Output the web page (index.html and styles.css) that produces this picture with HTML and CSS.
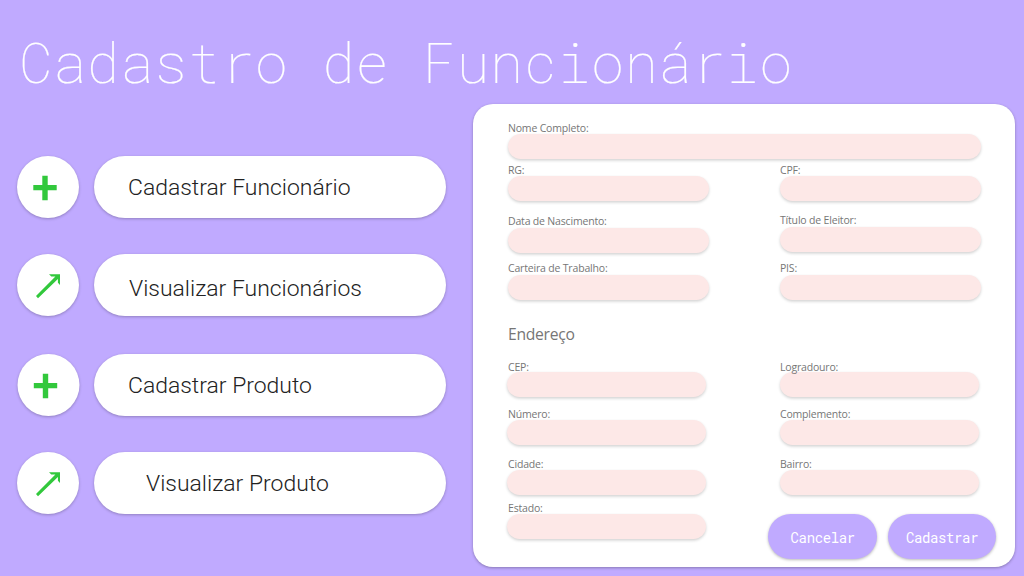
FILE: index.html
```html
<!DOCTYPE html>
<html lang="pt-BR">
<head>
<meta charset="utf-8">
<title>Cadastro de Funcionário</title>
<link rel="stylesheet" href="styles.css">
</head>
<body>
<h1 class="title">Cadastro de Funcionário</h1>
<div class="layout">
  <nav class="menu">
    <div class="item"><span class="circle"><svg class="icon" viewBox="0 0 62 62"><path d="M25.300 19.800h5.400v9.300h9v5.200h-9v10h-5.400v-10h-9v-5.200h9z"/></svg></span><a class="pill"><span>Cadastrar Funcionário</span></a></div>
    <div class="item"><span class="circle"><svg class="icon" viewBox="0 0 62 62"><path d="M32 20.200H43V31L40.900 28.700V25L21 44.200L19 42L38.400 22.600H34.300z"/></svg></span><a class="pill low"><span>Visualizar Funcionários</span></a></div>
    <div class="item"><span class="circle nudge"><svg class="icon" viewBox="0 0 62 62"><path d="M25.300 19.800h5.400v9.300h9v5.200h-9v10h-5.400v-10h-9v-5.200h9z"/></svg></span><a class="pill"><span>Cadastrar Produto</span></a></div>
    <div class="item"><span class="circle"><svg class="icon" viewBox="0 0 62 62"><path d="M32 20.200H43V31L40.900 28.700V25L21 44.200L19 42L38.400 22.600H34.300z"/></svg></span><a class="pill indent"><span>Visualizar Produto</span></a></div>
  </nav>
  <form class="panel">
    <div class="grid personal">
      <label class="field wide"><span>Nome Completo:</span><input></label>
      <label class="field"><span>RG:</span><input></label>
      <label class="field"><span>CPF:</span><input></label>
      <label class="field gap"><span>Data de Nascimento:</span><input></label>
      <label class="field raised"><span>Título de Eleitor:</span><input></label>
      <label class="field gap"><span>Carteira de Trabalho:</span><input></label>
      <label class="field gap"><span>PIS:</span><input></label>
    </div>
    <h2 class="heading">Endereço</h2>
    <div class="grid address">
      <label class="field tight"><span>CEP:</span><input></label>
      <label class="field tight"><span>Logradouro:</span><input></label>
      <label class="field"><span>Número:</span><input></label>
      <label class="field"><span>Complemento:</span><input></label>
      <label class="field"><span>Cidade:</span><input></label>
      <label class="field"><span>Bairro:</span><input></label>
      <label class="field"><span>Estado:</span><input></label>
      <div class="actions"><button type="button" class="button">Cancelar</button><button type="button" class="button">Cadastrar</button></div>
    </div>
  </form>
</div>
</body>
</html>
```
FILE: styles.css
```css
* { box-sizing: border-box; }
body {
  margin: 0;
  width: 1024px;
  height: 576px;
  overflow: hidden;
  background: #c0aaff;
  font-family: "Open Sans", "Noto Sans", sans-serif;
}
.title {
  margin: 0;
  height: 104px;
  padding: 24px 0 0 19px;
  font: 100 56.050px/74px "Roboto Mono", "Liberation Mono", monospace;
  color: #fff;
  -webkit-text-stroke: .2px #fff;
  white-space: nowrap;
}
.layout { display: flex; justify-content: space-between; padding: 0 9px 0 17px; }
.menu { display: flex; flex-direction: column; padding-top: 51.500px; width: 430px; }
.item { display: flex; gap: 15px; height: 62px; margin-bottom: 36px; }
.item:nth-child(2) { margin-bottom: 38.500px; }
.circle { width: 62px; height: 62px; border-radius: 50%; background: #fff; box-shadow: 0 1px 3px rgba(0,0,0,.25); }
.nudge { transform: translateX(.5px); }
.icon { display: block; width: 62px; height: 62px; fill: #32c83c; }
.pill {
  width: 352.400px;
  height: 62px;
  padding-left: 34px;
  border-radius: 32px;
  background: #fff;
  box-shadow: 0 1px 3px rgba(0,0,0,.25);
  font: 300 22.950px/64px Roboto, sans-serif;
  color: #222;
  white-space: nowrap;
}
.low { line-height: 69px; padding-left: 35px; }
.indent { padding-left: 52px; }
.panel {
  width: 542.500px;
  height: 463px;
  padding: 17px 34px 0 35.500px;
  border-radius: 20px;
  background: #fff;
  box-shadow: 0 1px 3px rgba(0,0,0,.3);
}
.grid { display: grid; grid-template-columns: 201.300px 201.300px; column-gap: 70.700px; }
.personal { grid-template-rows: 42px 51px 47px 39px; }
.address { grid-template-rows: 47px 50px 44px 60px; }
.wide { grid-column: 1 / 3; }
.field { display: flex; flex-direction: column; height: 38px; }
.field span { height: 13px; line-height: 14px; font-size: 10.500px; letter-spacing: -.180px; color: #767676; white-space: nowrap; position: relative; z-index: 1; }
.field input {
  width: 100%;
  height: 24.600px;
  flex: none;
  border: 0;
  padding: 0 12px;
  border-radius: 13px;
  background: #fde8e7;
  box-shadow: 0 1.500px 3px rgba(0,0,0,.18);
}
.gap span, .raised span { height: 14px; }
.raised span { line-height: 13px; }
.tight span { height: 12px; }
.address .field input { width: 199.400px; }
.address .field:nth-child(odd) input { margin-left: -1.500px; }
.heading { margin: 0; height: 60px; padding-top: 23px; font-size: 15.700px; line-height: 22px; letter-spacing: -.300px; font-weight: 400; color: #767676; }
.actions { display: flex; gap: 11px; margin: 13px 0 0 -11.500px; }
.button {
  flex: none;
  width: 108.400px;
  height: 45px;
  border: 0;
  padding: 1px 0 0;
  border-radius: 23px;
  background: #c0aaff;
  box-shadow: 0 1px 3px rgba(0,0,0,.28);
  color: #fff;
  font: 400 14px "Roboto Mono", "Liberation Mono", monospace;
  letter-spacing: -.380px;
}
```
